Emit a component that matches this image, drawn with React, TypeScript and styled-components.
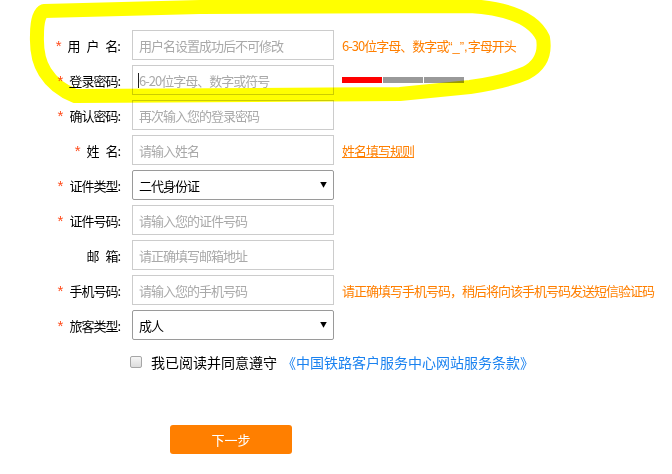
import styled, { createGlobalStyle } from "styled-components";

const GlobalStyle = createGlobalStyle`
  html, body {
    margin: 0;
    padding: 0;
    background: #fff;
  }
  body {
    font-family: "Noto Sans CJK SC", "Liberation Sans", sans-serif;
  }
`;

const Page = styled.div`
  position: relative;
  width: 672px;
  height: 474px;
  padding-top: 30px;
  box-sizing: border-box;
  overflow: hidden;
`;

const Form = styled.div`
  display: flex;
  flex-direction: column;
  gap: 5px;
`;

const Row = styled.div`
  display: flex;
  align-items: center;
  height: 30px;
`;

const Label = styled.label`
  width: 120px;
  margin-right: 12px;
  display: flex;
  justify-content: flex-end;
  align-items: center;
  font-size: 13px;
  letter-spacing: -1px;
  word-spacing: 5px;
  color: #000;
  white-space: pre;
`;

const Star = styled.span`
  color: #ff4a1a;
  font-family: "Liberation Sans", sans-serif;
  font-size: 15px;
  margin-right: 6px;
  letter-spacing: 0;
`;

const Field = styled.div`
  position: relative;
  width: 202px;
  height: 30px;
`;

const Input = styled.input`
  width: 100%;
  height: 100%;
  box-sizing: border-box;
  border: 1px solid #cccccc;
  padding: 0 6px;
  font-family: inherit;
  font-size: 13px;
  letter-spacing: -1px;
  color: #333;
  outline: none;

  &::placeholder {
    color: #a9a9a9;
  }
`;

const Caret = styled.span`
  position: absolute;
  left: 6px;
  top: 8px;
  width: 1px;
  height: 15px;
  background: #222;
`;

const Select = styled.select`
  width: 100%;
  height: 100%;
  box-sizing: border-box;
  border: 1px solid #9a9a9a;
  border-radius: 2px;
  padding: 0 6px;
  appearance: none;
  background: #fff;
  font-family: inherit;
  font-size: 13px;
  letter-spacing: -1px;
  color: #000;
`;

const Arrow = styled.span`
  position: absolute;
  right: 7px;
  top: 9px;
  font-size: 7px;
  color: #000;
  pointer-events: none;
`;

const Hint = styled.span<{ link?: boolean }>`
  margin-left: 8px;
  font-size: 13px;
  letter-spacing: -1px;
  color: #ff7f00;
  white-space: nowrap;
  text-decoration: ${(p) => (p.link ? "underline" : "none")};
`;

const Quote = styled.span`
  font-family: "Liberation Sans", sans-serif;
  letter-spacing: 0;
`;

const Strength = styled.div`
  display: flex;
  gap: 1px;
  margin-left: 8px;
`;

const Bar = styled.span<{ on?: boolean }>`
  width: 40px;
  height: 6px;
  background: ${(p) => (p.on ? "#ff0000" : "#999999")};
`;

const Terms = styled.div`
  display: flex;
  align-items: center;
  margin-top: 12px;
  padding-left: 130px;
  height: 20px;
  font-size: 14px;
  color: #000;
`;

const Check = styled.input`
  appearance: none;
  width: 12px;
  height: 12px;
  margin: 0 9px 0 0;
  border: 1px solid #a6a6a6;
  border-radius: 2px;
  background: linear-gradient(#f6f6f6, #dcdcdc);
`;

const TermsLink = styled.a`
  color: #1a82f0;
  margin-left: 5px;
`;

const NextBtn = styled.button`
  display: block;
  margin: 53px 0 0 170px;
  width: 122px;
  height: 29px;
  border: none;
  border-radius: 3px;
  background: #ff7f00;
  color: #fff;
  font-family: inherit;
  font-size: 13px;
`;

const Highlight = styled.svg`
  position: absolute;
  left: 0;
  top: 0;
  width: 672px;
  height: 474px;
  pointer-events: none;
  mix-blend-mode: multiply;
`;

interface IRow {
  star?: boolean;
  label: string;
  placeholder?: string;
  options?: string[];
}

const rows: IRow[] = [
  { star: true, label: "用 户 名:", placeholder: "用户名设置成功后不可修改" },
  { star: true, label: "登录密码:", placeholder: "6-20位字母、数字或符号" },
  { star: true, label: "确认密码:", placeholder: "再次输入您的登录密码" },
  { star: true, label: "姓 名:", placeholder: "请输入姓名" },
  { star: true, label: "证件类型:", options: ["二代身份证"] },
  { star: true, label: "证件号码:", placeholder: "请输入您的证件号码" },
  { label: "邮 箱:", placeholder: "请正确填写邮箱地址" },
  { star: true, label: "手机号码:", placeholder: "请输入您的手机号码" },
  { star: true, label: "旅客类型:", options: ["成人"] },
];

function renderExtra(i: number) {
  if (i === 0)
    return (
      <Hint>
        6-30位字母、数字或<Quote>“_”,</Quote>字母开头
      </Hint>
    );
  if (i === 1)
    return (
      <Strength>
        <Bar on />
        <Bar />
        <Bar />
      </Strength>
    );
  if (i === 3) return <Hint link>姓名填写规则</Hint>;
  if (i === 7) return <Hint>请正确填写手机号码，稍后将向该手机号码发送短信验证码</Hint>;
  return null;
}

function App() {
  return (
    <>
      <GlobalStyle />
      <Page>
        <Form>
          {rows.map((r, i) => (
            <Row key={r.label}>
              <Label>
                {r.star && <Star>*</Star>}
                {i === 1 ? (
                  <>
                    <u>登</u>录密码:
                  </>
                ) : (
                  r.label
                )}
              </Label>
              <Field>
                {r.options ? (
                  <>
                    <Select defaultValue={r.options[0]}>
                      {r.options.map((o) => (
                        <option key={o}>{o}</option>
                      ))}
                    </Select>
                    <Arrow>▼</Arrow>
                  </>
                ) : (
                  <>
                    <Input placeholder={r.placeholder} />
                    {i === 1 && <Caret />}
                  </>
                )}
              </Field>
              {renderExtra(i)}
            </Row>
          ))}
        </Form>
        <Terms>
          <Check type="checkbox" />
          我已阅读并同意遵守
          <TermsLink>《中国铁路客户服务中心网站服务条款》</TermsLink>
        </Terms>
        <NextBtn>下一步</NextBtn>
        <Highlight viewBox="0 0 672 474">
          <path
            d="M 44 11 L 200 7 L 470 6 Q 530 10 543 38 Q 547 62 526 73 Q 505 82 470 87 Q 430 91 400 94 L 75 96 Q 55 88 45 72 Q 36 58 37 35 Q 37 14 44 11 Z"
            fill="none"
            stroke="#ffff00"
            strokeWidth={14}
            strokeLinejoin="round"
          />
        </Highlight>
      </Page>
    </>
  );
}

export default App;
